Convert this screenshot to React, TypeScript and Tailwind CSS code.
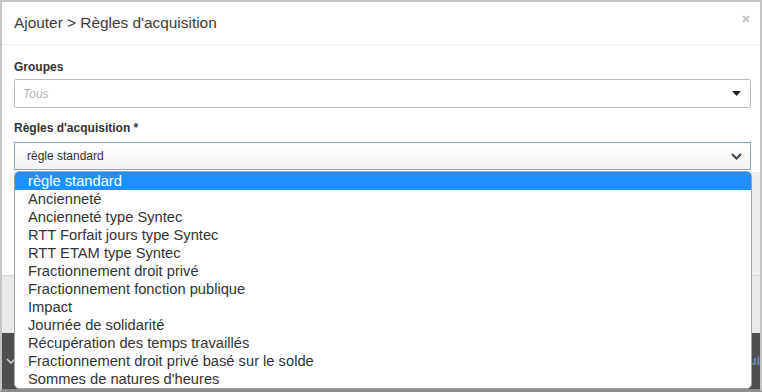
import { useState } from 'react';

const rules = [
  'règle standard',
  'Ancienneté',
  'Ancienneté type Syntec',
  'RTT Forfait jours type Syntec',
  'RTT ETAM type Syntec',
  'Fractionnement droit privé',
  'Fractionnement fonction publique',
  'Impact',
  'Journée de solidarité',
  'Récupération des temps travaillés',
  'Fractionnement droit privé basé sur le solde',
  "Sommes de natures d'heures",
];

export default function App() {
  const [selected] = useState(0);

  return (
    <div
      className="relative w-[762px] h-[392px] overflow-hidden bg-white border-2 border-b-[3px] border-[#c4c4c4] border-b-[#8c8c8c]"
      style={{ fontFamily: '"Liberation Sans", Arial, sans-serif' }}
    >
      {/* header */}
      <div className="flex items-center justify-between h-[43px] pl-[12px] pr-[10px] border-b border-[#efefef]">
        <h1 className="text-[15.4px] text-[#3a3a3a] leading-none">Ajouter &gt; Règles d'acquisition</h1>
        <svg width="8" height="8" viewBox="0 0 8 8" className="-mt-[9px]">
          <path d="M1 1 L7 7 M7 1 L1 7" stroke="#c6c6c6" strokeWidth="2" />
        </svg>
      </div>

      {/* body */}
      <div className="pl-[12px] pr-[9px] pt-[15px]">
        <label className="block text-[12px] leading-[15px] font-bold text-[#333]">Groupes</label>
        <div className="mt-[4px] h-[29px] flex items-center justify-between border border-[#bcbcbc] rounded-[2px] pl-[8px] pr-[9px]">
          <span className="text-[12px] italic text-[#b5b5b5]">Tous</span>
          <svg width="9" height="5" viewBox="0 0 9 5">
            <path d="M0 0 H9 L4.5 5 Z" fill="#222" />
          </svg>
        </div>

        <label className="block mt-[13px] text-[12px] leading-[15px] font-bold text-[#333]">
          Règles d'acquisition *
        </label>
        <div className="relative mt-[6px]">
          <div className="h-[28px] flex items-center justify-between border border-[#7ea9d2] bg-linear-to-b from-white to-[#f3f3f3] pl-[12px] pr-[8px]">
            <span className="text-[12px] text-[#333]">{rules[selected]}</span>
            <svg width="11" height="7" viewBox="0 0 11 7">
              <path d="M1 1 L5.5 5.5 L10 1" stroke="#444" strokeWidth="2" fill="none" />
            </svg>
          </div>

          {/* open list */}
          <ul className="absolute z-10 left-0 top-full mt-[1px] w-[738px] bg-white border border-[#a3a3a3] rounded-[5px] overflow-hidden">
            {rules.map((r, i) => (
              <li
                key={r}
                className={
                  'h-[18px] leading-[18px] pl-[13px] text-[14.7px] ' +
                  (i === selected ? 'bg-[#1e90ff] text-white' : 'text-[#333]')
                }
              >
                {r}
              </li>
            ))}
          </ul>
        </div>
      </div>

      {/* page behind the list */}
      <div className="flex flex-col h-[219px]">
        <div className="flex h-[105px]">
          <div className="flex-1" />
          <div className="w-[8px] mt-[2px] bg-[#eeeeee]" />
        </div>
        <div className="h-[58px] bg-[#e9e9e9] border-t border-[#d6d6d6]" />
        <div className="flex-1 flex items-center justify-between bg-[#4f4f4f]">
          <svg width="10" height="6" viewBox="0 0 10 6" className="ml-[4px]">
            <path d="M1 1 L5 5 L9 1" stroke="#d0d0d0" strokeWidth="1.5" fill="none" />
          </svg>
          <span className="text-[12px] font-bold text-[#6b8fb8] leading-none">ui</span>
        </div>
      </div>
    </div>
  );
}
